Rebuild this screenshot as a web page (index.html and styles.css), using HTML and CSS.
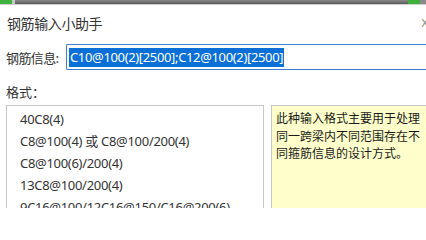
FILE: index.html
```html
<!DOCTYPE html>
<html lang="zh">
<head>
<meta charset="utf-8">
<link rel="stylesheet" href="styles.css">
</head>
<body>
<div class="topbar"><span class="g1"></span><span class="mid"></span><span class="g2"></span><span class="end"></span></div>
<div class="dialog">
  <div class="titlerow">
    <span class="title">钢筋输入小助手</span>
    <span class="close">X</span>
  </div>
  <div class="inputrow">
    <span class="label">钢筋信息:</span>
    <div class="input"><span class="sel">C10@100(2)[2500];C12@100(2)[2500]</span></div>
  </div>
  <div class="fmt">格式：</div>
  <div class="panes">
    <ul class="list">
      <li>40C8(4)</li>
      <li>C8@100(4) 或 C8@100/200(4)</li>
      <li>C8@100(6)/200(4)</li>
      <li>13C8@100/200(4)</li>
      <li>9C16@100/12C16@150/C16@200(6)</li>
    </ul>
    <div class="note">此种输入格式主要用于处理同一跨梁内不同范围存在不同箍筋信息的设计方式。</div>
  </div>
</div>
</body>
</html>
```
FILE: styles.css
```css
html, body { margin: 0; padding: 0; background: #fff; overflow: hidden; }
body { width: 426px; height: 208px; font-family: "Noto Sans", "Noto Sans CJK SC", sans-serif; color: #333; }
.topbar { display: flex; height: 4px; border-bottom: 1px solid #ccc; background: linear-gradient(#8a8a8a, #5a5a5a); }
.topbar .g1 { width: 12px; background: #3db33d; }
.topbar .mid { width: 3px; background: #c8c8c8; }
.topbar .g2 { width: 12px; margin-left: auto; background: #3db33d; }
.topbar .end { width: 6px; background: #8a8a8a; }
.dialog { padding: 0 0 0 6px; }
.titlerow { display: flex; align-items: center; height: 34px; margin-top: 1px; }
.title { font-family: "Noto Sans CJK SC", sans-serif; font-size: 14px; color: #333; padding-left: 1px; letter-spacing: -0.4px; }
.close { margin-left: auto; font-family: "DejaVu Sans", sans-serif; font-size: 10px; color: #888; margin-right: -2px; }
.inputrow { display: flex; align-items: center; height: 26px; margin-top: 4px; }
.label { width: 60px; font-family: "Noto Sans CJK SC", sans-serif; font-size: 13px; color: #333; letter-spacing: -0.6px; }
.input { flex: 1; height: 24px; border: 1px solid #3a7fd5; border-right: none; border-radius: 2px 0 0 2px; display: flex; align-items: center; padding-left: 2px; }
.sel { background: #0a6fd6; color: #fff; font-size: 13px; line-height: 19px; letter-spacing: -0.35px; padding: 0 1px; }
.fmt { font-family: "Noto Sans CJK SC", sans-serif; font-size: 13px; margin-top: 12px; height: 20px; line-height: 20px; color: #333; }
.panes { display: flex; gap: 7px; margin-top: 3px; }
.list { list-style: none; margin: 0; padding: 2px 0 0 13px; width: 243px; height: 110px; border: 1px solid #c8c8c8; border-bottom: none; overflow: hidden; }
.list li { font-size: 13px; height: 22px; line-height: 22px; white-space: nowrap; letter-spacing: -0.3px; color: #333; }
.note { flex: 1; background: #ffffcc; border: 1px solid #c8c8c8; border-bottom: none; border-right: none; height: 110px; padding: 3px 0 0 4px; font-family: "Noto Sans CJK SC", sans-serif; font-size: 12px; line-height: 17.5px; color: #1a1a1a; }
```
